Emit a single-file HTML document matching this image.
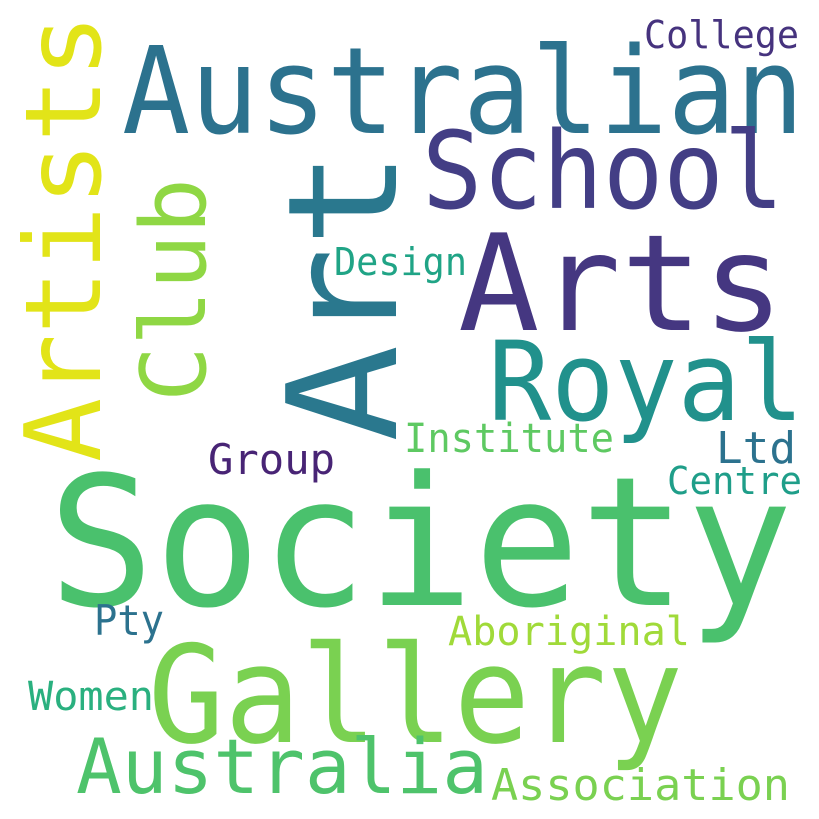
<!DOCTYPE html>
<html><head><meta charset="utf-8">
<style>
html,body{margin:0;padding:0;background:#fff;}
svg{display:block;}
text{font-family:"DejaVu Sans Mono","Liberation Mono",monospace;}
</style></head>
<body>
<svg width="819" height="819" viewBox="0 0 819 819" xmlns="http://www.w3.org/2000/svg">
<rect width="819" height="819" fill="#fff"/>
<text x="48" y="605" font-size="180" fill="#4ac16d" textLength="745" lengthAdjust="spacingAndGlyphs">Society</text>
<text x="148" y="742" font-size="135" fill="#7ad151" textLength="535" lengthAdjust="spacingAndGlyphs">Gallery</text>
<text x="122" y="133" font-size="120" fill="#2c728e" textLength="682" lengthAdjust="spacingAndGlyphs">Australian</text>
<text x="422" y="208" font-size="107" fill="#433e85" textLength="362" lengthAdjust="spacingAndGlyphs">School</text>
<text x="458" y="330" font-size="134" fill="#453781" textLength="326" lengthAdjust="spacingAndGlyphs">Arts</text>
<text x="488" y="420" font-size="110" fill="#21918c" textLength="316" lengthAdjust="spacingAndGlyphs">Royal</text>
<text transform="translate(396,442) rotate(-90)" font-size="152" fill="#2a788e" textLength="292" lengthAdjust="spacingAndGlyphs">Art</text>
<text transform="translate(100,462) rotate(-90)" font-size="105" fill="#e2e418" textLength="448" lengthAdjust="spacingAndGlyphs">Artists</text>
<text transform="translate(205,402) rotate(-90)" font-size="90" fill="#8fd744" textLength="224" lengthAdjust="spacingAndGlyphs">Club</text>
<text x="334" y="275" font-size="38" fill="#20a486" textLength="133" lengthAdjust="spacingAndGlyphs">Design</text>
<text x="644" y="48" font-size="38" fill="#46337e" textLength="155" lengthAdjust="spacingAndGlyphs">College</text>
<text x="404" y="452" font-size="40" fill="#5ec962" textLength="210" lengthAdjust="spacingAndGlyphs">Institute</text>
<text x="208" y="474" font-size="42" fill="#482475" textLength="127" lengthAdjust="spacingAndGlyphs">Group</text>
<text x="716" y="463" font-size="44" fill="#2c728e" textLength="80" lengthAdjust="spacingAndGlyphs">Ltd</text>
<text x="667" y="494" font-size="38" fill="#1f9e89" textLength="135" lengthAdjust="spacingAndGlyphs">Centre</text>
<text x="94" y="635" font-size="42" fill="#2c728e" textLength="70" lengthAdjust="spacingAndGlyphs">Pty</text>
<text x="448" y="645" font-size="40" fill="#a0da39" textLength="242" lengthAdjust="spacingAndGlyphs">Aboriginal</text>
<text x="28" y="710" font-size="40" fill="#2ab07f" textLength="126" lengthAdjust="spacingAndGlyphs">Women</text>
<text x="76" y="793" font-size="76" fill="#4ec36b" textLength="412" lengthAdjust="spacingAndGlyphs">Australia</text>
<text x="491" y="800" font-size="44" fill="#7ad151" textLength="299" lengthAdjust="spacingAndGlyphs">Association</text>
</svg>
</body></html>
